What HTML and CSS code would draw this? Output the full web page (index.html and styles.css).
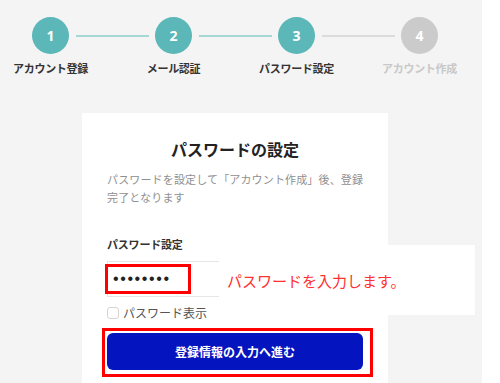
FILE: index.html
```html
<!DOCTYPE html>
<html lang="ja">
  <head>
    <meta charset="UTF-8" />
    <meta name="viewport" content="width=device-width, initial-scale=1.0" />
    <title>パスワードの設定</title>
    <link rel="stylesheet" href="styles.css">
  </head>
  <body>
    <div class="page">
      <ol class="steps">
        <li class="step done"><span class="num">1</span><span class="label">アカウント登録</span></li>
        <li class="step done"><span class="num">2</span><span class="label">メール認証</span></li>
        <li class="step current"><span class="num">3</span><span class="label">パスワード設定</span></li>
        <li class="step todo"><span class="num">4</span><span class="label">アカウント作成</span></li>
      </ol>

      <div class="card">
        <h1>パスワードの設定</h1>
        <p class="desc">パスワードを設定して「アカウント作成」後、登録<br>完了となります</p>

        <label class="field-label" for="pw">パスワード設定</label>
        <div class="input-wrap">
          <input id="pw" class="input" type="password" value="12345678" />
          <span class="mark mark-input"></span>
        </div>

        <label class="show-pw">
          <span class="check"></span>
          パスワード表示
        </label>

        <div class="btn-wrap">
          <button class="btn">登録情報の入力へ進む</button>
          <span class="mark mark-btn"></span>
        </div>
      </div>

      <!-- annotation callout -->
      <div class="note">パスワードを入力します。</div>
    </div>
  </body>
</html>
```

FILE: styles.css
```css
body {
  margin: 0;
  background: #fff;
  font-family: "Noto Sans CJK JP", "Noto Sans", sans-serif;
  color: #333;
}
.page {
  position: relative;
  width: 482px;
  height: 383px;
  background: #f4f4f4;
  overflow: hidden;
}

/* progress steps */
.steps {
  display: flex;
  list-style: none;
  margin: 0 0 0 -11px;
  padding: 17px 0 0;
}
.step {
  position: relative;
  width: 123px;
  display: flex;
  flex-direction: column;
  align-items: center;
}
.step:not(:last-child)::after {
  content: "";
  position: absolute;
  top: 18px;
  left: calc(50% + 25px);
  width: 73px;
  height: 2px;
  background: #a6d7d5;
}
.step.current::after {
  background: #dcdcdc;
}
.num {
  width: 37px;
  height: 37px;
  border-radius: 50%;
  background: #5bb7b8;
  color: #fff;
  font-family: "Open Sans", sans-serif;
  font-weight: 700;
  font-size: 14px;
  display: flex;
  align-items: center;
  justify-content: center;
}
.todo .num {
  background: #cbcbcb;
}
.label {
  margin-top: 7px;
  font-size: 11px;
  line-height: 14px;
  font-weight: 700;
  letter-spacing: -0.3px;
  white-space: nowrap;
}
.todo .label {
  color: #c8c8c8;
}

/* card */
.card {
  margin: 38px 0 0 82px;
  width: 256px;
  height: 300px;
  padding: 26px 25px 0;
  background: #fff;
}
h1 {
  margin: 0;
  text-align: center;
  font-size: 16px;
  line-height: 20px;
  font-weight: 700;
  color: #222;
}
.desc {
  margin: 11px 0 0;
  font-size: 11px;
  line-height: 18px;
  letter-spacing: 0.15px;
  color: #8f8f8f;
  white-space: nowrap;
}
.field-label {
  display: block;
  margin-top: 31px;
  font-size: 11px;
  line-height: 14px;
  font-weight: 700;
  letter-spacing: -0.2px;
}
.input-wrap {
  position: relative;
  margin-top: 10px;
}
.input {
  display: block;
  box-sizing: border-box;
  width: 100%;
  height: 36px;
  margin: 0;
  padding: 0 5px;
  border: 1px solid #e6e6e6;
  font-family: "Liberation Sans", sans-serif;
  font-size: 16px;
  letter-spacing: 1.6px;
  color: #222;
  background: #fff;
}
.mark {
  position: absolute;
  border: 3px solid #f00;
  pointer-events: none;
}
.mark-input {
  left: -2px;
  top: 3px;
  width: 80px;
  height: 24px;
}
.show-pw {
  display: flex;
  align-items: center;
  gap: 4px;
  margin-top: 9px;
  font-size: 12px;
  line-height: 14px;
  color: #555;
}
.check {
  width: 10px;
  height: 10px;
  border: 1px solid #d4d4d4;
  border-radius: 3px;
  background: #fff;
}
.btn-wrap {
  position: relative;
  margin-top: 13px;
}
.btn {
  display: block;
  width: 100%;
  height: 37px;
  border: 0;
  border-radius: 6px;
  background: #0414be;
  color: #fff;
  font-family: inherit;
  font-size: 12px;
  font-weight: 700;
}
.mark-btn {
  left: -5px;
  top: -5px;
  width: 265px;
  height: 43px;
}

/* annotation */
.note {
  position: absolute;
  left: 219px;
  top: 245px;
  width: 248px;
  height: 70px;
  padding-left: 8px;
  display: flex;
  align-items: center;
  background: #fff;
  color: #ff3030;
  font-size: 15px;
}
```
